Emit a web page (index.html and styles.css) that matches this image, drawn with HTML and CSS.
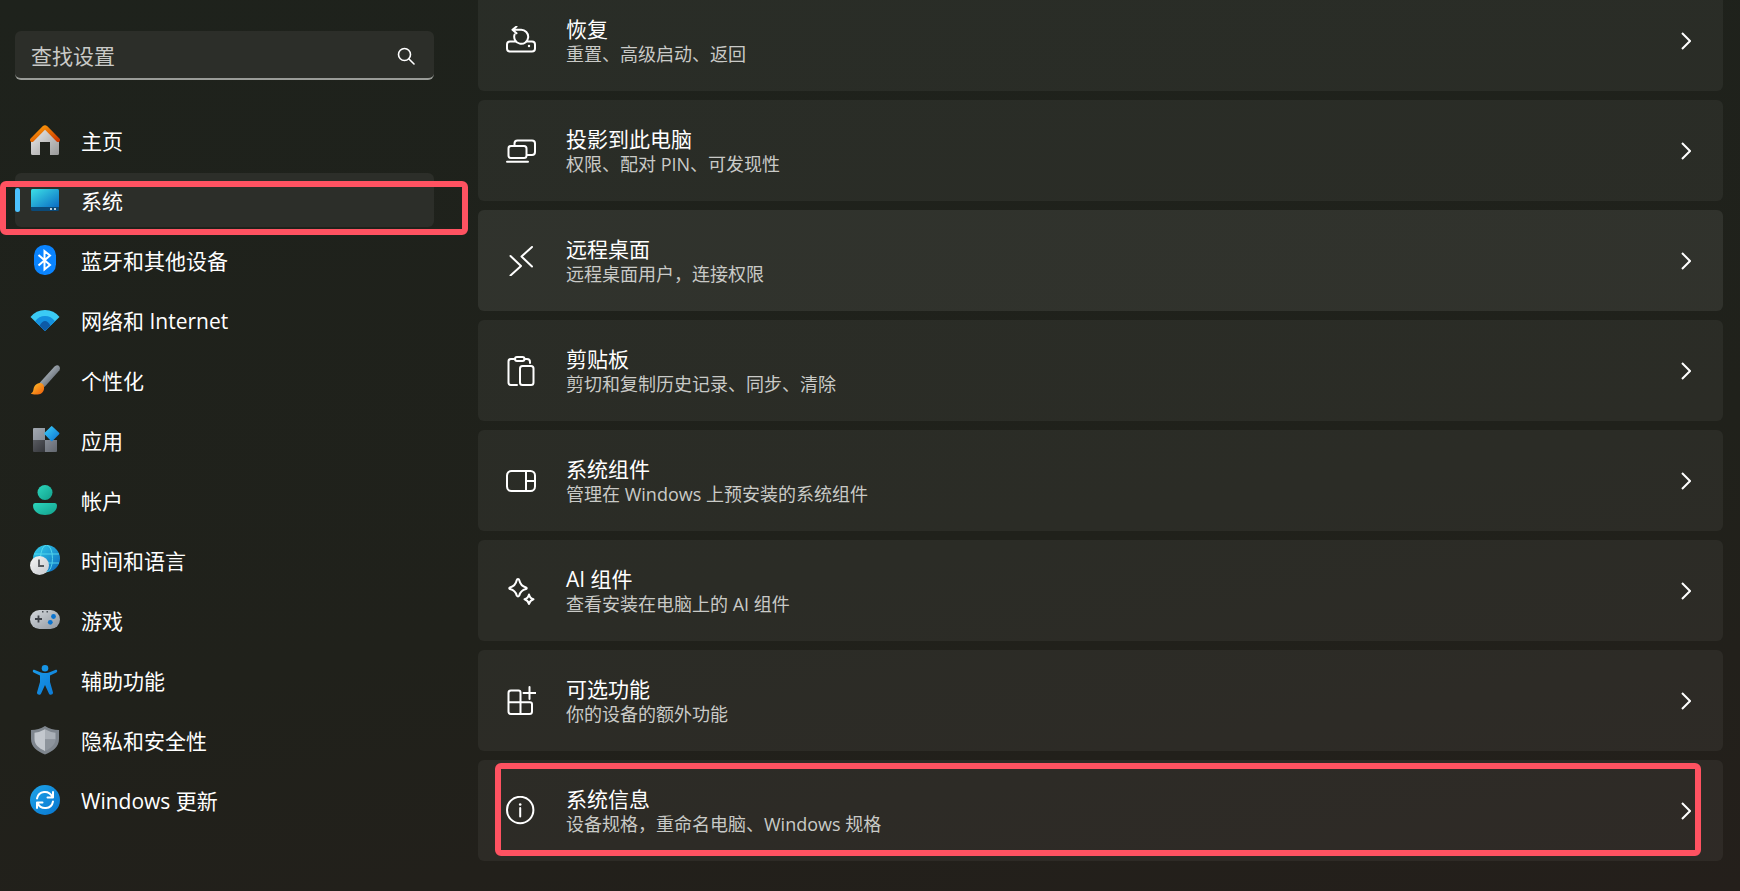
FILE: index.html
```
<!DOCTYPE html>
<html lang="zh-CN">
<head>
    <meta charset="UTF-8">
    <meta name="viewport" content="width=device-width, initial-scale=1.0">
    <title>设置 - 系统</title>
    <link rel="stylesheet" href="styles.css">
</head>
<body>
    <div class="settings">
        <aside class="sidebar">
            <form class="search" role="search">
                <input type="search" id="search" placeholder="查找设置" aria-label="查找设置">
                <button type="submit" aria-label="搜索">
                    <svg width="18" height="18" viewBox="0 0 18 18" fill="none" stroke="#fff" stroke-width="1.6" stroke-linecap="round"><circle cx="7.5" cy="7.5" r="6"/><path d="M12 12l5 5"/></svg>
                </button>
            </form>

            <nav class="nav">
                <a class="nav-item" href="#home">
                    <svg class="icon" viewBox="0 0 30 30">
                        <defs>
                            <linearGradient id="wall" x1="0" y1="0" x2="1" y2="1"><stop offset="0" stop-color="#eee"/><stop offset="1" stop-color="#999"/></linearGradient>
                            <linearGradient id="roof" x1="0" y1="0" x2="1" y2="1"><stop offset="0" stop-color="#ffa10a"/><stop offset="1" stop-color="#d03a00"/></linearGradient>
                        </defs>
                        <path d="M15 3L29 16v12.500q0 1.500-1.500 1.500H20V17H10v13H2.500Q1 30 1 28.500V16z" fill="url(#wall)"/>
                        <path d="M2 15L14 2.800q1-.9 2 0L28 15" fill="none" stroke="url(#roof)" stroke-width="4" stroke-linecap="round"/>
                    </svg>
                    <span>主页</span>
                </a>
                <a class="nav-item active" href="#system" aria-current="page">
                    <svg class="icon" viewBox="0 0 30 30">
                        <defs>
                            <linearGradient id="screen" x1="0" y1="0" x2="1" y2="1"><stop offset="0" stop-color="#3ce0e6"/><stop offset="1" stop-color="#0a6cc4"/></linearGradient>
                        </defs>
                        <rect x="1" y="4" width="28" height="22" rx="1.500" fill="#0b4a78"/>
                        <path d="M1 5.500Q1 4 2.500 4h25Q29 4 29 5.500V22H1z" fill="url(#screen)"/>
                        <path d="M20 23h2v2h-2zM24 23h2v2h-2z" fill="#b9cfdd"/>
                    </svg>
                    <span>系统</span>
                    <span class="mark mark-nav"></span>
                </a>
                <a class="nav-item" href="#bluetooth">
                    <svg class="icon" viewBox="0 0 30 30">
                        <rect x="4" y="0" width="22" height="30" rx="10.500" fill="#0a84ff"/>
                        <path d="M8.500 10l11.500 10L14.500 24.500V6L20 10.500 8.500 20.500" fill="none" stroke="#fff" stroke-width="2"/>
                    </svg>
                    <span>蓝牙和其他设备</span>
                </a>
                <a class="nav-item" href="#network">
                    <svg class="icon" viewBox="0 0 30 30">
                        <path d="M.5 12Q6 5 15 5t14.500 7L15 26z" fill="#3bcbf5"/>
                        <path d="M5 16.300Q9 11 15 11t10 5.300L15 26z" fill="#1490df"/>
                        <path d="M9.500 20.700Q12 16 15 16t5.500 4.700L15 26z" fill="#0d5aa7"/>
                    </svg>
                    <span>网络和 Internet</span>
                </a>
                <a class="nav-item" href="#personalization">
                    <svg class="icon" viewBox="0 0 30 30">
                        <defs>
                            <linearGradient id="handle" x1="0" y1="0" x2="1" y2="1"><stop offset=".2" stop-color="#b8c0c8"/><stop offset=".8" stop-color="#5a626b"/></linearGradient>
                            <linearGradient id="bristle" x1="0" y1="0" x2="1" y2="1"><stop offset="0" stop-color="#ffc52e"/><stop offset="1" stop-color="#ee5a0a"/></linearGradient>
                        </defs>
                        <path d="M9.500 18L24.500 1.500q3-2 4.500-.5t.5 4.200L14.500 22z" fill="url(#handle)"/>
                        <path d="M13.500 20c2 4.500-1 9.500-6 9.500-3 .2-5 0-6.700-1C4.500 27 2.500 23.500 5 20.500c2.500-3 6.500-3.500 8.500-.5z" fill="url(#bristle)"/>
                    </svg>
                    <span>个性化</span>
                </a>
                <a class="nav-item" href="#apps">
                    <svg class="icon" viewBox="0 0 30 30">
                        <defs>
                            <linearGradient id="tileA" x1="0" y1="0" x2="1" y2="1"><stop offset="0" stop-color="#a3a9b1"/><stop offset="1" stop-color="#858c96"/></linearGradient>
                            <linearGradient id="tileB" x1="0" y1="0" x2="1" y2="1"><stop offset="0" stop-color="#585b60"/><stop offset="1" stop-color="#34363a"/></linearGradient>
                            <linearGradient id="tileC" x1="0" y1="0" x2="1" y2="1"><stop offset="0" stop-color="#868c95"/><stop offset="1" stop-color="#62676f"/></linearGradient>
                            <linearGradient id="gem" x1="0" y1="0" x2="1" y2="1"><stop offset="0" stop-color="#3cd0fa"/><stop offset="1" stop-color="#0a70d4"/></linearGradient>
                        </defs>
                        <path d="M4 3h11v12H3V4q0-1 1-1z" fill="url(#tileA)"/>
                        <path d="M3 15h12v12H4q-1 0-1-1z" fill="url(#tileB)"/>
                        <path d="M15 15h12v11q0 1-1 1H15z" fill="url(#tileC)"/>
                        <path d="M21 1.400q.7-.7 1.400 0l6.700 6.400q.7.700 0 1.400L22.400 16q-.7.700-1.400 0l-6.400-6.800q-.6-.7 0-1.400z" fill="url(#gem)"/>
                    </svg>
                    <span>应用</span>
                </a>
                <a class="nav-item" href="#accounts">
                    <svg class="icon" viewBox="0 0 30 30">
                        <defs>
                            <linearGradient id="person" x1="0" y1="0" x2="1" y2="1"><stop offset="0" stop-color="#2cd6bd"/><stop offset="1" stop-color="#12a08b"/></linearGradient>
                        </defs>
                        <circle cx="15" cy="7.500" r="7.500" fill="url(#person)"/>
                        <path d="M5 18h20q2 0 2 2.500C27 26 22 30 15 30S3 26 3 20.500Q3 18 5 18z" fill="url(#person)"/>
                    </svg>
                    <span>帐户</span>
                </a>
                <a class="nav-item" href="#time">
                    <svg class="icon" viewBox="0 0 30 30">
                        <defs>
                            <linearGradient id="globe" x1="0" y1="0" x2="1" y2="1"><stop offset="0" stop-color="#35d2ec"/><stop offset="1" stop-color="#0a66bd"/></linearGradient>
                            <linearGradient id="dial" x1="0" y1="0" x2="1" y2="1"><stop offset="0" stop-color="#f5f5f5"/><stop offset="1" stop-color="#c6c9ce"/></linearGradient>
                        </defs>
                        <circle cx="16.500" cy="13.500" r="13.500" fill="url(#globe)"/>
                        <g fill="none" stroke="#5fe3f3" stroke-width="1" opacity=".8"><ellipse cx="16.500" cy="13.500" rx="6" ry="13.500"/><path d="M4 9h25M4 18h25"/></g>
                        <circle cx="9.500" cy="20.500" r="9.500" fill="url(#dial)"/>
                        <path d="M9 14.500V21h5" fill="none" stroke="#55585c" stroke-width="1.800"/>
                    </svg>
                    <span>时间和语言</span>
                </a>
                <a class="nav-item" href="#gaming">
                    <svg class="icon" viewBox="0 0 30 30">
                        <defs>
                            <linearGradient id="pad" x1="0" y1="0" x2="1" y2="1"><stop offset="0" stop-color="#d5d9dd"/><stop offset="1" stop-color="#8f969e"/></linearGradient>
                        </defs>
                        <rect x="0" y="5" width="30" height="19" rx="9.500" fill="url(#pad)"/>
                        <path d="M8.500 10.500v7M5 14h7" stroke="#3c4046" stroke-width="1.800"/>
                        <path d="M12 6h1.500v1.500H12zM16.500 6H18v1.500h-1.500z" fill="#4b5057"/>
                        <circle cx="23.500" cy="11.500" r="2.400" fill="#0a74d0"/>
                        <circle cx="20.300" cy="17.300" r="2.400" fill="#0a74d0"/>
                    </svg>
                    <span>游戏</span>
                </a>
                <a class="nav-item" href="#accessibility">
                    <svg class="icon" viewBox="0 0 30 30">
                        <defs>
                            <linearGradient id="body" x1="0" y1="0" x2="1" y2="1"><stop offset="0" stop-color="#1b9bea"/><stop offset="1" stop-color="#0b78d4"/></linearGradient>
                        </defs>
                        <circle cx="15" cy="3.300" r="3.300" fill="#1795e6"/>
                        <path d="M4.200 4.700L11 7.400q4 1.200 8 0l6.800-2.700c1.600-.3 2 2.200.6 2.900L20 10.500v6.500l3 10.500c.4 2-3 3.300-4 1.200L15 20l-4 8.700c-1 2.100-4.400.8-4-1.200L10 17v-6.500L3.600 7.600C2.200 6.900 2.600 4.400 4.200 4.700z" fill="url(#body)"/>
                    </svg>
                    <span>辅助功能</span>
                </a>
                <a class="nav-item" href="#privacy">
                    <svg class="icon" viewBox="0 0 30 30">
                        <path d="M15 1q6 4 14 4v9c0 8-6 12-14 15.500C7 26 1 22 1 14V5q8 0 14-4z" fill="#7f868e"/>
                        <path d="M15 4.300Q9.500 7.500 4.500 7.700V14c0 5.500 4 9 10.500 12z" fill="#c3c8ce"/>
                        <path d="M15 4.300Q20.500 7.500 25.500 7.700V14.500H15z" fill="#aab0b7"/>
                        <path d="M25.500 14.500C25.300 19.500 21 23.200 15 26V14.500z" fill="#8d949c"/>
                    </svg>
                    <span>隐私和安全性</span>
                </a>
                <a class="nav-item" href="#update">
                    <svg class="icon" viewBox="0 0 30 30">
                        <defs>
                            <linearGradient id="sync" x1="0" y1="0" x2="1" y2="1"><stop offset="0" stop-color="#1ea4e9"/><stop offset="1" stop-color="#0875cf"/></linearGradient>
                        </defs>
                        <circle cx="15" cy="15" r="15" fill="url(#sync)"/>
                        <path d="M7 13.500C8.500 5.500 19 4.500 22.500 12M23 7v5.500h-5.500M23 16.500C21.500 24.500 11 25.500 7.500 18M7 23v-5.500h5.500" fill="none" stroke="#fff" stroke-width="2" stroke-linecap="round" stroke-linejoin="round"/>
                    </svg>
                    <span>Windows 更新</span>
                </a>
            </nav>
        </aside>

        <main class="cards">
            <a class="card" href="#recovery">
                <svg class="icon line" viewBox="0 0 30 30">
                    <path d="M9.500 15.500H4q-3 0-3 3v4q0 3 3 3h22q3 0 3-3v-4q0-3-3-3h-5.500"/>
                    <path d="M8.600 8.500A7 7 0 1 0 15 3.800H7M10.500 .5L6.500 3.800l4 3.500"/>
                    <circle cx="23" cy="20" r="1.200" fill="#fff" stroke="none"/>
                </svg>
                <span class="card-text"><span class="title">恢复</span><span class="desc">重置、高级启动、返回</span></span>
                <svg class="chevron" viewBox="0 0 10 18"><path d="M1 1l8 8-8 8"/></svg>
            </a>
            <a class="card" href="#projecting">
                <svg class="icon line" viewBox="0 0 30 30">
                    <rect x="2.500" y="10" width="18" height="12" rx="2.500"/>
                    <path d="M8.500 9.500V7.500q0-3 3-3H26q3 0 3 3V16q0 3-3 3h-5M1 25.800h21"/>
                </svg>
                <span class="card-text"><span class="title">投影到此电脑</span><span class="desc">权限、配对 PIN、可发现性</span></span>
                <svg class="chevron" viewBox="0 0 10 18"><path d="M1 1l8 8-8 8"/></svg>
            </a>
            <a class="card hover" href="#remote">
                <svg class="icon line" viewBox="0 0 30 30">
                    <path d="M4.500 10L15 20 4.500 29.500M26 1L15.500 10.500 26 20.500"/>
                </svg>
                <span class="card-text"><span class="title">远程桌面</span><span class="desc">远程桌面用户，连接权限</span></span>
                <svg class="chevron" viewBox="0 0 10 18"><path d="M1 1l8 8-8 8"/></svg>
            </a>
            <a class="card" href="#clipboard">
                <svg class="icon line" viewBox="0 0 30 30">
                    <path d="M11 29H5q-2.500 0-2.500-2.500V5.500Q2.500 3 5 3h3.500M18.500 3H21q3 0 3 3v1"/>
                    <rect x="9" y="1" width="9.500" height="4" rx="2"/>
                    <rect x="14" y="10" width="13.500" height="19" rx="2.500"/>
                </svg>
                <span class="card-text"><span class="title">剪贴板</span><span class="desc">剪切和复制历史记录、同步、清除</span></span>
                <svg class="chevron" viewBox="0 0 10 18"><path d="M1 1l8 8-8 8"/></svg>
            </a>
            <a class="card" href="#components">
                <svg class="icon line" viewBox="0 0 30 30">
                    <rect x="1" y="5" width="28" height="20" rx="4.500"/>
                    <path d="M20 5v20M20 15h9"/>
                </svg>
                <span class="card-text"><span class="title">系统组件</span><span class="desc">管理在 Windows 上预安装的系统组件</span></span>
                <svg class="chevron" viewBox="0 0 10 18"><path d="M1 1l8 8-8 8"/></svg>
            </a>
            <a class="card" href="#ai">
                <svg class="icon line" viewBox="0 0 30 30">
                    <path d="M12 3q1 0 1.300 1.300Q14.500 10 20 11.500q1.500.7 0 1.500Q14.500 14.500 13.300 19.500q-1.300 2-2.600 0Q9.500 14.500 4 13q-1.500-.8 0-1.500Q9.500 10 10.700 4.300 11 3 12 3z"/>
                    <path d="M23 18.500q1 4 4.500 4.700-3.500 1-4.500 4.800-1-3.800-4.500-4.800 3.500-.7 4.500-4.700z"/>
                </svg>
                <span class="card-text"><span class="title">AI 组件</span><span class="desc">查看安装在电脑上的 AI 组件</span></span>
                <svg class="chevron" viewBox="0 0 10 18"><path d="M1 1l8 8-8 8"/></svg>
            </a>
            <a class="card" href="#features">
                <svg class="icon line" viewBox="0 0 30 30">
                    <path d="M14.500 28V6.500q0-2-2-2H5Q2.500 4.500 2.500 7v18.500Q2.500 28 5 28h18.500q2.500 0 2.500-2.500V18.300q0-2-2-2H2.500M23.500 1v12M17.500 7h12"/>
                </svg>
                <span class="card-text"><span class="title">可选功能</span><span class="desc">你的设备的额外功能</span></span>
                <svg class="chevron" viewBox="0 0 10 18"><path d="M1 1l8 8-8 8"/></svg>
            </a>
            <a class="card" href="#about">
                <svg class="icon line" viewBox="0 0 30 30">
                    <circle cx="14.200" cy="14" r="13.200"/>
                    <path d="M14.200 12v8.500"/>
                    <circle cx="14.200" cy="8.500" r="1.300" fill="#fff" stroke="none"/>
                </svg>
                <span class="card-text"><span class="title">系统信息</span><span class="desc">设备规格，重命名电脑、Windows 规格</span></span>
                <svg class="chevron" viewBox="0 0 10 18"><path d="M1 1l8 8-8 8"/></svg>
                <span class="mark mark-card"></span>
            </a>
        </main>
    </div>
</body>
</html>
```

FILE: styles.css
```
* {
    margin: 0;
    padding: 0;
    box-sizing: border-box;
}

body {
    font-family: "Open Sans", "Noto Sans CJK SC", sans-serif;
    font-size: 21px;
    color: #fff;
    background: linear-gradient(170deg, #1e221c 0%, #20211b 60%, #241f1b 100%);
    height: 100vh;
    overflow: hidden;
}

a {
    color: inherit;
    text-decoration: none;
}

.settings {
    display: flex;
    gap: 44px;
    padding: 0 17px 0 15px;
}

/* left column */
.sidebar {
    flex: 0 0 419px;
    padding-top: 31px;
}

.search {
    display: flex;
    align-items: center;
    height: 49px;
    margin-bottom: 33px;
    padding: 2px 17px 0 16px;
    background: #2c2e29;
    border-bottom: 2px solid #9a9c98;
    border-radius: 6px;
}

.search input {
    flex: 1;
    min-width: 0;
    font: inherit;
    color: #fff;
    background: none;
    border: none;
    outline: none;
}

.search input::placeholder {
    color: #c9cac8;
    opacity: 1;
}

.search button {
    display: flex;
    padding: 2px;
    background: none;
    border: none;
}

.nav {
    display: flex;
    flex-direction: column;
    gap: 6px;
}

.nav-item {
    position: relative;
    display: flex;
    align-items: center;
    gap: 21px;
    height: 54px;
    padding-left: 15px;
    border-radius: 6px;
}

.nav-item.active {
    background: #2c2e29;
}

.nav-item.active::before {
    content: "";
    position: absolute;
    left: 0;
    top: 15px;
    width: 5px;
    height: 24px;
    border-radius: 3px;
    background: #4cc2ff;
}

.icon {
    flex: none;
    width: 30px;
    height: 30px;
}

.line {
    fill: none;
    stroke: #fff;
    stroke-width: 2;
    stroke-linecap: round;
    stroke-linejoin: round;
}

/* right column, scrolled down to its end */
.cards {
    flex: 1;
    min-width: 0;
    display: flex;
    flex-direction: column;
    gap: 9px;
    margin-top: -10px;
}

.card {
    position: relative;
    display: flex;
    align-items: center;
    height: 101px;
    padding: 0 32px 0 28px;
    background: rgba(255, 255, 255, 0.05);
    border-radius: 6px;
}

.card.hover {
    background: rgba(255, 255, 255, 0.08);
}

.card-text {
    flex: 1;
    display: flex;
    flex-direction: column;
    padding-left: 30px;
}

.title {
    line-height: 26px;
}

.desc {
    font-size: 18px;
    line-height: 24px;
    color: #c9cac7;
}

.chevron {
    width: 10px;
    height: 18px;
    fill: none;
    stroke: #fff;
    stroke-width: 2;
}

/* red highlight frames */
.mark {
    position: absolute;
    border: 6px solid #ff5261;
    border-radius: 6px;
    pointer-events: none;
}

.mark-nav {
    left: -15px;
    right: -34px;
    top: 8px;
    height: 54px;
}

.mark-card {
    left: 17px;
    right: 22px;
    top: 3px;
    height: 93px;
}
```
